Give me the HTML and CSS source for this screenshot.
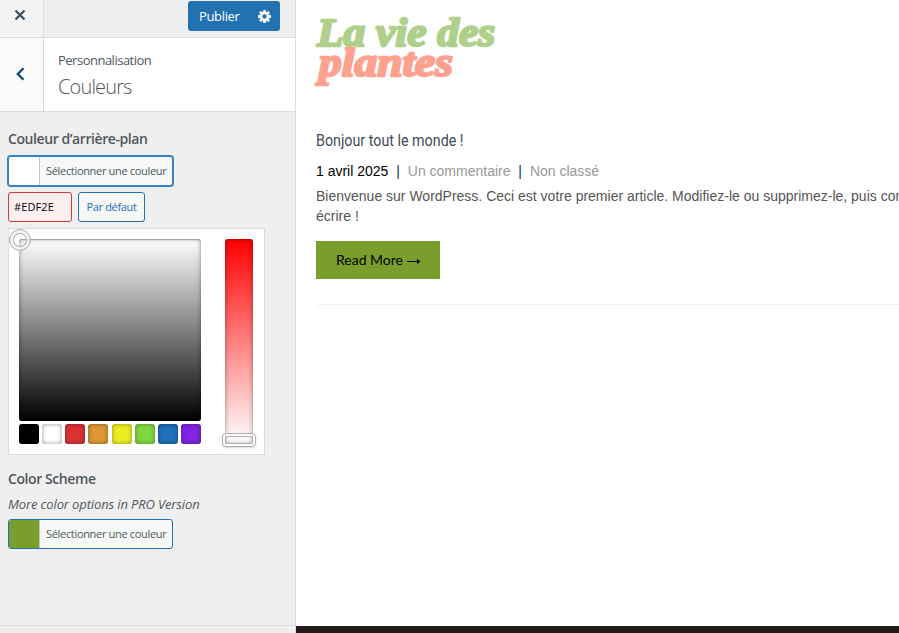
FILE: index.html
```html
<!DOCTYPE html>
<html lang="fr">
<head>
<meta charset="utf-8">
<title>Personnalisation : Couleurs</title>
<link rel="stylesheet" href="styles.css">
</head>
<body>
<div class="app">
  <aside class="sidebar">
    <header class="topbar">
      <button class="close" aria-label="Fermer"><svg width="12" height="12" viewBox="0 0 12 12"><path d="M1.500 1.500l9 9M10.500 1.500l-9 9" stroke="#3c4d5c" stroke-width="2.200" fill="none"/></svg></button>
      <div class="publish"><span class="publish-label">Publier</span>
        <svg width="13" height="13" viewBox="0 0 14 14"><g fill="#fff"><rect x="5.500" width="3" height="14" rx=".6"/><rect x="5.500" width="3" height="14" rx=".6" transform="rotate(45 7 7)"/><rect x="5.500" width="3" height="14" rx=".6" transform="rotate(90 7 7)"/><rect x="5.500" width="3" height="14" rx=".6" transform="rotate(135 7 7)"/><circle cx="7" cy="7" r="5"/></g><circle cx="7" cy="7" r="2.300" fill="#2271b1"/></svg>
      </div>
    </header>
    <div class="section-title">
      <button class="back" aria-label="Retour"><svg width="10" height="14" viewBox="0 0 10 14"><path d="M8.500 1.300L2.800 7l5.700 5.700" stroke="#0a4b78" stroke-width="2.300" fill="none"/></svg></button>
      <div class="titles"><span class="crumb">Personnalisation</span><h1>Couleurs</h1></div>
    </div>
    <div class="controls">
      <h2 class="background"><span class="t-bg">Couleur d’arrière-plan</span></h2>
      <button class="picker-btn focused"><span class="swatch white"></span><span class="picker-text">Sélectionner une couleur</span></button>
      <div class="inputs"><span class="hex">#EDF2E</span><button class="default">Par défaut</button></div>
      <div class="picker">
        <div class="left">
          <div class="square"><i class="handle"></i></div>
          <div class="palette"><i class="p1"></i><i class="p2"></i><i class="p3"></i><i class="p4"></i><i class="p5"></i><i class="p6"></i><i class="p7"></i><i class="p8"></i></div>
        </div>
        <div class="strip"><i class="slider"></i></div>
      </div>
      <h2 class="scheme"><span class="t-scheme">Color Scheme</span></h2>
      <p class="description">More color options in PRO Version</p>
      <button class="picker-btn"><span class="swatch green"></span><span class="picker-text">Sélectionner une couleur</span></button>
    </div>
    <footer class="side-footer"></footer>
  </aside>
  <main class="preview">
    <div class="content">
      <svg class="logo" width="190" height="90" viewBox="0 0 190 90" role="img" aria-label="La vie des plantes">
        <text class="logo-a" x="2" y="45.500" textLength="178" lengthAdjust="spacingAndGlyphs">La vie des</text>
        <text class="logo-b" x="4" y="75.500" textLength="134" lengthAdjust="spacingAndGlyphs">plantes</text>
      </svg>
      <h3><span>Bonjour tout le monde !</span></h3>
      <div class="meta"><span class="date">1 avril 2025</span><b>|</b><span>Un commentaire</span><b>|</b><span>Non classé</span></div>
      <p class="excerpt">Bienvenue sur WordPress. Ceci est votre premier article. Modifiez-le ou supprimez-le, puis com<br>écrire !</p>
      <a class="more"><span>Read More</span><svg width="14" height="8" viewBox="0 0 14 8"><path d="M0 4.500h12.500" stroke="#000" fill="none"/><path d="M10 2l3.500 2.500L10 7z"/></svg></a>
      <hr>
    </div>
    <footer class="site-footer"></footer>
  </main>
</div>
</body>
</html>
```
FILE: styles.css
```css
* { box-sizing: border-box; }
body { margin: 0; font-family: "Open Sans", "Noto Sans", sans-serif; color: #50575e; overflow: hidden; }
button { font: inherit; color: inherit; margin: 0; padding: 0; border: 0; background: none; white-space: nowrap; }
i { display: block; }
.app { display: flex; width: 899px; height: 633px; overflow: hidden; }
.sidebar { width: 296px; flex: none; background: #efefef; border-right: 1px solid #dcdcde; display: flex; flex-direction: column; }
.topbar { height: 38px; flex: none; display: flex; justify-content: space-between; border-bottom: 1px solid #dcdcde; }
.close { width: 44px; height: 37px; background: #f3f3f3; border-right: 1px solid #dcdcde; padding: 0 3px 7px 0; display: flex; align-items: center; justify-content: center; }
.publish { width: 92px; height: 30px; margin: 1px 15px 0 0; background: #2271b1; border-radius: 3px; color: #fff; display: flex; align-items: center; justify-content: space-between; padding: 0 9px 0 11px; font-size: 13px; }
.publish-label { letter-spacing: -.35px; }
.section-title { height: 74px; flex: none; background: #fff; border-bottom: 1px solid #dcdcde; display: flex; }
.back { width: 44px; background: #fafafa; border-right: 1px solid #dcdcde; display: flex; align-items: center; justify-content: center; padding: 0 4px 2px 0; }
.titles { padding: 12px 0 0 14px; }
.crumb { display: block; font-size: 13px; line-height: 20px; letter-spacing: -.5px; }
h1 { margin: 4px 0 0; font-size: 20px; line-height: 26px; font-weight: 300; letter-spacing: -.85px; }
.controls { padding: 17px 0 0 8px; flex: 1; }
h2 { margin: 0; font-size: 14px; line-height: 20px; font-weight: 600; height: 20px; }
.t-bg { letter-spacing: -.42px; }
.t-scheme { letter-spacing: -.42px; }
.picker-btn { display: flex; width: 165px; height: 30px; border: 1px solid #2271b1; border-radius: 3px; background: #f6f7f7; overflow: hidden; font-size: 11px; line-height: 28px; }
.picker-btn.focused { margin-top: 7px; box-shadow: 0 0 0 1px #3582c4; border-color: #3582c4; }
.swatch { width: 31px; height: 28px; flex: none; border-right: 1px solid #c3c4c7; }
.white { background: #fff; }
.green { background: #7a9e2c; }
.picker-text { padding-left: 6px; letter-spacing: -.32px; }
.inputs { display: flex; gap: 6px; margin-top: 6px; }
.hex { width: 64px; height: 30px; border: 1px solid #d63638; border-radius: 3px; background: #fcf0f1; color: #000; font-size: 11px; line-height: 28px; padding-left: 5px; letter-spacing: .1px; }
.default { width: 67px; height: 30px; border: 1px solid #2271b1; border-radius: 3px; background: #f6f7f7; color: #2271b1; font-size: 11px; letter-spacing: -.35px; padding-bottom: 2px; }
.picker { width: 257px; height: 227px; margin-top: 6px; background: #fff; border: 1px solid #dcdcde; padding: 10px 11px 0 10px; display: flex; justify-content: space-between; }
.left { width: 182px; }
.square { position: relative; height: 182px; border-radius: 3px; background: linear-gradient(#fff, #000); box-shadow: inset 0 0 5px rgba(0,0,0,.4), inset 0 1px 1px rgba(0,0,0,.25); }
.handle { position: absolute; left: -10px; top: -10px; width: 22px; height: 22px; border-radius: 50%; border: 1px solid #aaa; box-shadow: inset 0 0 0 3px #f0f0f0, inset 0 0 0 4px #aaa; opacity: .9; }
.palette { display: flex; justify-content: space-between; margin-top: 3px; }
.palette i { width: 20px; height: 20px; border-radius: 3px; box-shadow: inset 0 0 5px rgba(0,0,0,.4); }
.p1 { background: #000; } .p2 { background: #fff; } .p3 { background: #d33; } .p4 { background: #d93; }
.p5 { background: #ee2; } .p6 { background: #81d742; } .p7 { background: #1e73be; } .p8 { background: #8224e3; }
.strip { position: relative; width: 28px; height: 205px; border-radius: 3px; background: linear-gradient(#f00, #fff); box-shadow: inset 0 0 5px rgba(0,0,0,.4); }
.slider { position: absolute; left: -3px; top: 194px; width: 34px; height: 14px; border: 1px solid #aaa; border-radius: 4px; box-shadow: inset 0 0 0 2px #fff, inset 0 0 0 3px #aaa, 0 1px 2px rgba(0,0,0,.2); opacity: .9; }
.scheme { margin-top: 14px; }
.description { margin: 5px 0 5px; font-size: 13px; line-height: 20px; font-style: italic; letter-spacing: -.13px; }
.side-footer { height: 8px; flex: none; border-top: 1px solid #dcdcde; }
.preview { flex: 1; min-width: 0; background: #fff; display: flex; flex-direction: column; overflow: hidden; font-family: "Liberation Sans", Arial, sans-serif; }
.content { flex: 1; padding-left: 20px; }
.logo { display: block; margin-left: -1px; overflow: visible; }
.logo text { font: italic 700 41px "Liberation Serif", serif; stroke-width: 2.4px; stroke-linejoin: round; }
.logo .logo-a { fill: #afd08b; stroke: #afd08b; }
.logo .logo-b { fill: #ffa18f; stroke: #ffa18f; }
h3 { margin: 37px 0 0; height: 26px; font: 400 17px/26px Roboto, sans-serif; color: #404b5a; white-space: nowrap; }
h3 span { display: inline-block; transform: scaleX(.84); transform-origin: left; }
.meta { display: flex; margin-top: 8px; font-size: 14px; line-height: 20px; color: #999; white-space: nowrap; }
.meta b { color: #00345d; font-weight: 400; width: 19.4px; text-align: center; }
.meta .date { color: #000; }
.excerpt { margin: 5px 0 0; font-size: 14px; line-height: 20px; color: #555; white-space: nowrap; }
.more { display: flex; align-items: center; gap: 4px; width: 124px; height: 38px; margin-top: 15px; padding: 0 0 1px 20px; background: #7a9e2c; color: #000; font: 14px Lato, sans-serif; }
.more svg { margin-top: 3px; }
hr { border: 0; border-top: 1px solid #f2f2f2; margin: 25px 0 0; }
.site-footer { height: 7px; background: #231a19; }
```
